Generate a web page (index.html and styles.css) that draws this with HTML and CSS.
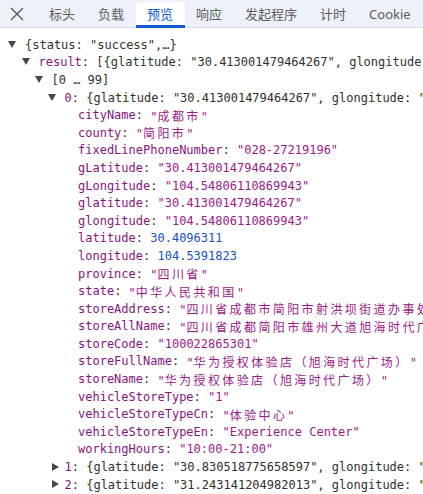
FILE: index.html
```html
<!doctype html>
<html>

<head>
  <meta charset="UTF-8" />
  <link rel="stylesheet" href="styles.css">
</head>

<body>
  <div class="tabbar">
    <div class="close">
      <svg viewBox="0 0 14 14" width="14" height="14">
        <path d="M1,1L13,13M13,1L1,13" stroke="#555" stroke-width="1.3" fill="none" />
      </svg>
    </div>
    <div class="tab">标头</div>
    <div class="tab">负载</div>
    <div class="tab active">预览</div>
    <div class="tab">响应</div>
    <div class="tab">发起程序</div>
    <div class="tab">计时</div>
    <div class="tab">Cookie</div>
  </div>

  <div class="tree">
    <div class="row d0"><span class="tog open"></span><span>{status: "success",…}</span></div>
    <div class="row d1"><span class="tog open"></span><span class="key">result</span><span>: [{glatitude: "30.413001479464267", glongitude: "104.54806110869943",…},…]</span></div>
    <div class="row d2"><span class="tog open"></span><span>[0 … 99]</span></div>
    <div class="row d3"><span class="tog open"></span><span class="key">0</span><span>: {glatitude: "30.413001479464267", glongitude: "104.54806110869943",…}</span></div>

    <div class="row leaf"><span class="key">cityName</span>: <span class="str">"<span class="cjk">成都市</span>"</span></div>
    <div class="row leaf"><span class="key">county</span>: <span class="str">"<span class="cjk">简阳市</span>"</span></div>
    <div class="row leaf"><span class="key">fixedLinePhoneNumber</span>: <span class="str">"028-27219196"</span></div>
    <div class="row leaf"><span class="key">gLatitude</span>: <span class="str">"30.413001479464267"</span></div>
    <div class="row leaf"><span class="key">gLongitude</span>: <span class="str">"104.54806110869943"</span></div>
    <div class="row leaf"><span class="key">glatitude</span>: <span class="str">"30.413001479464267"</span></div>
    <div class="row leaf"><span class="key">glongitude</span>: <span class="str">"104.54806110869943"</span></div>
    <div class="row leaf"><span class="key">latitude</span>: <span class="num">30.4096311</span></div>
    <div class="row leaf"><span class="key">longitude</span>: <span class="num">104.5391823</span></div>
    <div class="row leaf"><span class="key">province</span>: <span class="str">"<span class="cjk">四川省</span>"</span></div>
    <div class="row leaf"><span class="key">state</span>: <span class="str">"<span class="cjk">中华人民共和国</span>"</span></div>
    <div class="row leaf"><span class="key">storeAddress</span>: <span class="str">"<span class="cjk">四川省成都市简阳市射洪坝街道办事处东街</span>"</span></div>
    <div class="row leaf"><span class="key">storeAllName</span>: <span class="str">"<span class="cjk">四川省成都简阳市雄州大道旭海时代广场</span>"</span></div>
    <div class="row leaf"><span class="key">storeCode</span>: <span class="str">"100022865301"</span></div>
    <div class="row leaf"><span class="key">storeFullName</span>: <span class="str">"<span class="cjk">华为授权体验店（旭海时代广场）</span>"</span></div>
    <div class="row leaf"><span class="key">storeName</span>: <span class="str">"<span class="cjk">华为授权体验店（旭海时代广场）</span>"</span></div>
    <div class="row leaf"><span class="key">vehicleStoreType</span>: <span class="str">"1"</span></div>
    <div class="row leaf"><span class="key">vehicleStoreTypeCn</span>: <span class="str">"<span class="cjk">体验中心</span>"</span></div>
    <div class="row leaf"><span class="key">vehicleStoreTypeEn</span>: <span class="str">"Experience Center"</span></div>
    <div class="row leaf"><span class="key">workingHours</span>: <span class="str">"10:00-21:00"</span></div>

    <div class="row d3"><span class="tog shut"></span><span class="key">1</span><span>: {glatitude: "30.830518775658597", glongitude: "104.2",…}</span></div>
    <div class="row d3"><span class="tog shut"></span><span class="key">2</span><span>: {glatitude: "31.243141204982013", glongitude: "104.5",…}</span></div>
  </div>
</body>

</html>
```

FILE: styles.css
```css
body {
  margin: 0;
  padding: 0;
  background-color: #FFFFFF;
  overflow: hidden;
}

.tabbar {
  display: flex;
  align-items: flex-end;
  height: 27px;
  background-color: #EDF2FA;
  border-bottom: 1px solid #D5DDEA;
  font-family: "Noto Sans", "Noto Sans CJK SC", sans-serif;
  font-size: 13px;
  color: #5B5B5B;
  white-space: nowrap;
}

.close {
  width: 37.5px;
  height: 27px;
  display: flex;
  align-items: center;
  justify-content: center;
  flex-shrink: 0;
  padding-right: 3px;
  box-sizing: border-box;
}

.tab {
  height: 25px;
  line-height: 24px;
  padding: 0 11.5px;
  box-sizing: border-box;
  flex-shrink: 0;
}

.tab.active {
  background-color: #FFFFFF;
  color: #0F5BD3;
  border-radius: 4px 4px 0 0;
  border-bottom: 3px solid #0F5BD3;
  height: 26px;
  margin-bottom: -1px;
}

.tree {
  padding-top: 8px;
  font-family: "DejaVu Sans Mono", monospace;
  font-size: 12px;
  color: #303030;
}

.row {
  display: flex;
  align-items: center;
  height: 17.6px;
  white-space: pre;
  overflow: hidden;
}

.d0 { padding-left: 8px; }
.d1 { padding-left: 21.5px; }
.d2 { padding-left: 34.5px; }
.d3 { padding-left: 47.5px; }
.leaf { padding-left: 78px; }

.tog {
  width: 17px;
  flex-shrink: 0;
  height: 8px;
  position: relative;
}

.tog.open::before {
  content: "";
  position: absolute;
  left: 0;
  top: 0;
  border-left: 4.5px solid transparent;
  border-right: 4.5px solid transparent;
  border-top: 7px solid #474747;
}

.tog.shut {
  height: 9px;
}

.tog.shut::before {
  content: "";
  position: absolute;
  left: 4px;
  top: 0;
  border-top: 4.5px solid transparent;
  border-bottom: 4.5px solid transparent;
  border-left: 7px solid #474747;
}

.key {
  color: #86147C;
}

.str {
  color: #9A1A88;
}

.num {
  color: #1A4FC0;
}

.cjk {
  font-family: "Noto Sans CJK SC", sans-serif;
  letter-spacing: 2.4px;
}
```
